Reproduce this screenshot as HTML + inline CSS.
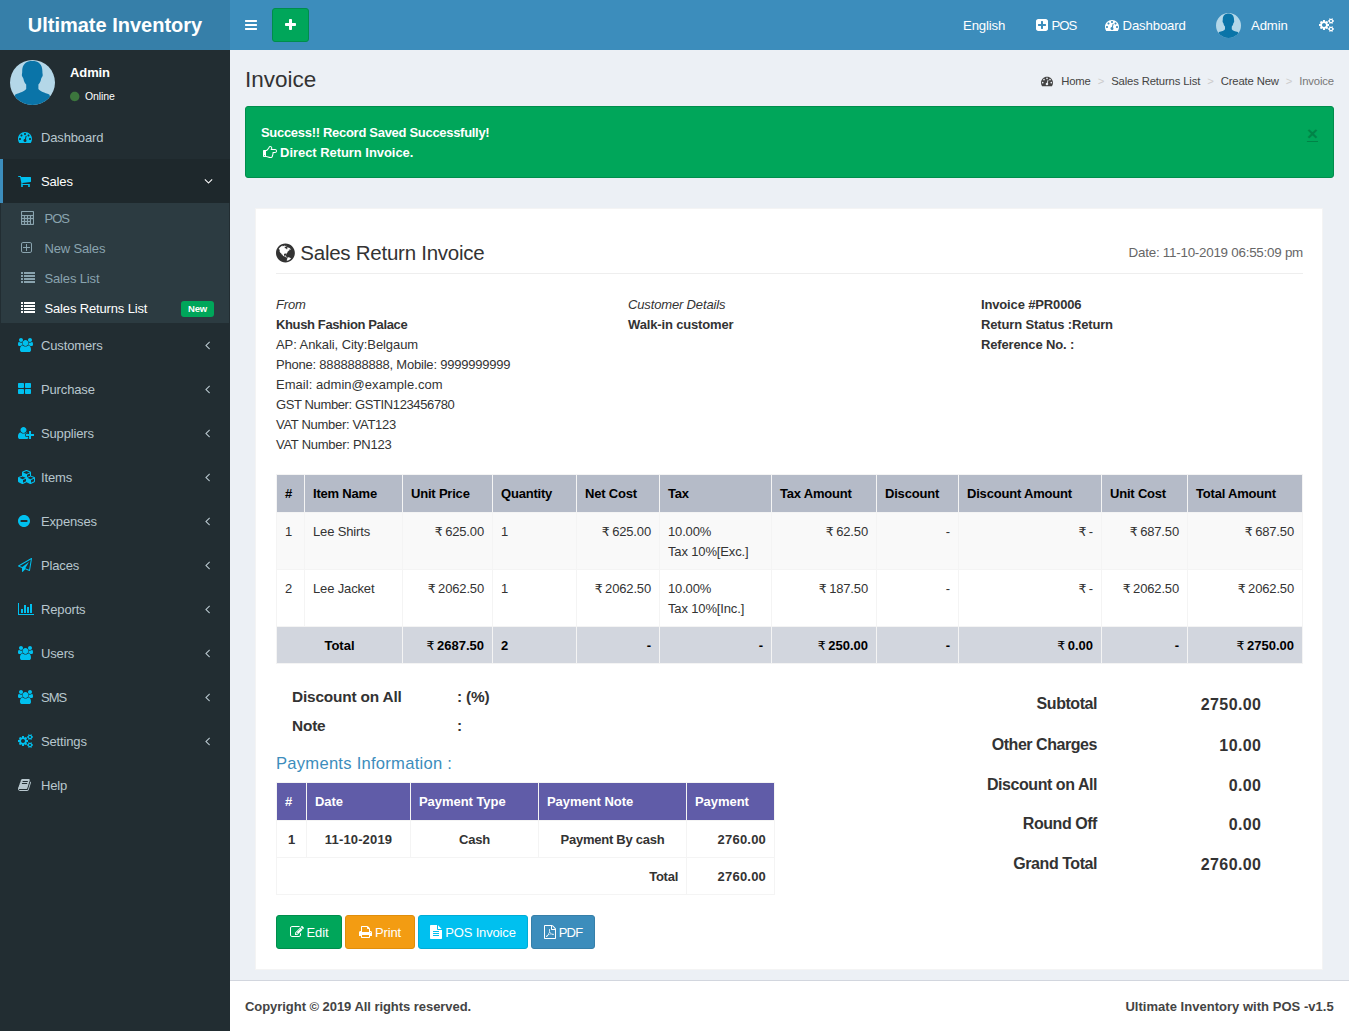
<!DOCTYPE html>
<html lang="en">
<head>
<meta charset="utf-8">
<title>Ultimate Inventory | Invoice</title>
<style>
*{box-sizing:border-box}
html,body{margin:0;padding:0}
body{width:1349px;height:1031px;overflow:hidden;background:#222d32;font-family:"Liberation Sans","DejaVu Sans",sans-serif;font-size:13px;line-height:20px;color:#333;letter-spacing:-0.15px;position:relative}
a{color:inherit;text-decoration:none}
ul{list-style:none;margin:0;padding:0}
svg.fa{display:inline-block;vertical-align:-2px;fill:currentColor;overflow:visible}
b,strong,th{font-weight:700}
.inr{font-family:"DejaVu Sans",sans-serif;font-size:12.5px;font-weight:400;letter-spacing:-1px;line-height:14px}

/* header */
.main-header{position:absolute;left:0;top:0;width:1349px;height:50px;background:#3c8dbc}
.logo{position:absolute;left:0;top:0;width:230px;height:50px;background:#367fa9;color:#fff;text-align:center;font-size:20px;line-height:50px;font-weight:700;letter-spacing:0}
.sidebar-toggle{position:absolute;left:230px;top:0;width:42px;height:50px;color:#fff;padding:16px 15px 14px;line-height:20px}
.btn-add{position:absolute;left:272px;top:8px;width:37px;height:34px;background:#00a65a;border:1px solid #008d4c;border-radius:3px;color:#fff;text-align:center;line-height:33px;padding-top:0}
.nav-item{position:absolute;top:0;height:50px;padding:16px 15px 14px;color:#fff;line-height:20px;font-size:13.2px;white-space:nowrap}
.nav-item .user-image{position:absolute;left:15px;top:13px;width:25px;height:25px}

/* sidebar */
.main-sidebar{position:absolute;left:0;top:50px;width:230px;height:981px;background:#222d32}
.user-panel{position:relative;height:65px}
.user-panel .avatar{position:absolute;left:10px;top:10px;width:45px;height:45px}
.user-panel .name{position:absolute;left:70px;top:13px;color:#fff;font-weight:700;font-size:13px;line-height:20px;letter-spacing:-0.1px}
.user-panel .status{position:absolute;left:70px;top:37px;color:#fff;font-size:10.5px;line-height:18px;letter-spacing:-0.1px}
.user-panel .status svg{margin-right:5.5px;color:#3c763d;vertical-align:-1.5px}
.sidebar-menu>li{position:relative}
.sidebar-menu>li>a{display:block;height:44px;padding:13px 5px 11px 15px;border-left:3px solid transparent;color:#b8c7ce;white-space:nowrap}
.sidebar-menu>li>a .ic{display:inline-block;width:23px;color:#00c0ef}
.sidebar-menu>li.active>a{background:#1e282c;border-left-color:#3c8dbc;color:#fff}
.sidebar-menu .arrow{position:absolute;right:20px;top:15px;color:inherit}
.treeview-menu{background:#2c3b41;padding-left:5px;margin:0 1px}
.treeview-menu>li{position:relative}
.treeview-menu>li>a{display:block;height:30px;padding:6px 5px 4px 15px;color:#8aa4af;white-space:nowrap}
.treeview-menu>li>a .ic{display:inline-block;width:23.5px}
.treeview-menu>li.active>a{color:#fff}
.label-new{position:absolute;right:15px;top:8px;width:33px;text-align:center;background:#00a65a;color:#fff;font-size:9.5px;font-weight:700;line-height:16px;height:16px;padding:0;border-radius:3px;letter-spacing:-0.1px}

/* content */
.content-wrapper{position:absolute;left:230px;top:50px;width:1119px;height:930px;background:#ecf0f5}
.content-wrapper h1{position:absolute;left:15px;top:17px;margin:0;font-size:22.5px;line-height:26px;font-weight:400;color:#333;letter-spacing:0}
.breadcrumb{position:absolute;right:15px;top:23px;font-size:11.3px;line-height:17px;color:#444;white-space:nowrap;letter-spacing:-0.15px}
.breadcrumb .sep{color:#ccc;padding:0 7px}
.breadcrumb .act{color:#777}
.alert{position:absolute;left:15px;top:56px;width:1089px;height:72px;background:#00a65a;border:1px solid #008d4c;border-radius:3px;color:#fff;padding:16px 15px 14px;font-weight:700;letter-spacing:-0.3px}
.alert .close{position:absolute;right:15px;top:17px;font-size:19px;line-height:20px;font-weight:700;color:#000;opacity:.2;text-decoration:underline;letter-spacing:0}
.invoice{position:absolute;left:25px;top:158px;width:1068px;height:762px;background:#fff;border:1px solid #f4f4f4}
.page-header{position:absolute;left:20px;top:31px;width:1027px;height:34px;padding-top:1px;border-bottom:1px solid #eee;margin:0;font-size:20.5px;line-height:24px;font-weight:400;letter-spacing:-0.25px;white-space:nowrap}
.page-header small{position:absolute;right:0;top:3px;font-size:13.4px;color:#666;line-height:20px;letter-spacing:-0.25px}
.col{position:absolute;top:86px;white-space:nowrap}
.col i{font-style:italic}
table{border-collapse:collapse;border-spacing:0;table-layout:fixed}
.items{position:absolute;left:20px;top:265px;width:1026px}
.items th,.items td{border:1px solid #f4f4f4;padding:9px 8px 7px;vertical-align:top;text-align:left;line-height:20px;white-space:nowrap;overflow:hidden}
.items th{background:#b5bbc8;color:#000;border-color:#f4f4f4;letter-spacing:-0.2px;padding:9px 8px 8px}
.items tr.odd td{background:#f9f9f9}
.items tr.tot td{background:#d2d6de;color:#000;font-weight:700;letter-spacing:0}
.r{text-align:right !important}
.c{text-align:center !important}
.dl{position:absolute;left:36px;font-size:15.4px;font-weight:700;line-height:24px;letter-spacing:-0.18px;white-space:nowrap}
.dl span{position:absolute;left:165px;top:0}
.pay-h{position:absolute;left:20px;top:543px;font-size:16.6px;line-height:24px;color:#3c8dbc;letter-spacing:0.25px;white-space:nowrap}
.pay{position:absolute;left:20px;top:573px;width:498px}
.pay th,.pay td{border:1px solid #f4f4f4;padding:9px 8px 7px;line-height:20px;font-weight:700;white-space:nowrap;letter-spacing:-0.25px}
.pay th{background:#605ca8;color:#fff;text-align:left;padding:9px 8px 8px;letter-spacing:-0.05px}
.pay .n{letter-spacing:0.2px}
.sum{position:absolute;font-size:16px;font-weight:700;line-height:24px;letter-spacing:-0.45px;white-space:nowrap;text-align:right}
.btn{position:absolute;top:706px;height:34px;border:1px solid;border-radius:3px;color:#fff;text-align:center;line-height:32px;padding-top:1px;white-space:nowrap;letter-spacing:-0.15px}
.btn svg{margin-right:3px}

.main-footer{position:absolute;left:230px;top:980px;width:1119px;height:51px;background:#fff;border-top:1px solid #d2d6de;padding:16px 15px 14px;color:#444;font-weight:700;letter-spacing:-0.05px;white-space:nowrap}
.main-footer .right{position:absolute;right:15.3px;top:16px;letter-spacing:0.03px}

.ls1{letter-spacing:-1px}
.sum.n{letter-spacing:0.4px}

</style>
</head>
<body>
<header class="main-header">
  <a class="logo" href="#">Ultimate Inventory</a>
  <a class="sidebar-toggle" href="#"><svg class="fa" width="12.00" height="14" viewBox="0 0 1536 1792"><path d="M1536 1344C1536 1309 1507 1280 1472 1280H64C29 1280 0 1309 0 1344V1472C0 1507 29 1536 64 1536H1472C1507 1536 1536 1507 1536 1472ZM1536 832C1536 797 1507 768 1472 768H64C29 768 0 797 0 832V960C0 995 29 1024 64 1024H1472C1507 1024 1536 995 1536 960ZM1536 320C1536 285 1507 256 1472 256H64C29 256 0 285 0 320V448C0 483 29 512 64 512H1472C1507 512 1536 483 1536 448Z"/></svg></a>
  <a class="btn-add" href="#"><svg class="fa" width="11.00" height="14" viewBox="0 0 1408 1792"><path d="M1408 736C1408 683 1365 640 1312 640H896V224C896 171 853 128 800 128H608C555 128 512 171 512 224V640H96C43 640 0 683 0 736V928C0 981 43 1024 96 1024H512V1440C512 1493 555 1536 608 1536H800C853 1536 896 1493 896 1440V1024H1312C1365 1024 1408 981 1408 928Z"/></svg></a>
  <a class="nav-item" href="#" style="left:948px">English</a>
  <a class="nav-item" href="#" style="left:1021px"><svg class="fa" width="12.00" height="14" viewBox="0 0 1536 1792"><path d="M1280 960C1280 995 1251 1024 1216 1024H896V1344C896 1379 867 1408 832 1408H704C669 1408 640 1379 640 1344V1024H320C285 1024 256 995 256 960V832C256 797 285 768 320 768H640V448C640 413 669 384 704 384H832C867 384 896 413 896 448V768H1216C1251 768 1280 797 1280 832V960ZM1536 416C1536 257 1407 128 1248 128H288C129 128 0 257 0 416V1376C0 1535 129 1664 288 1664H1248C1407 1664 1536 1535 1536 1376Z"/></svg> <span class="ls1">POS</span></a>
  <a class="nav-item" href="#" style="left:1090px"><svg class="fa" width="14.00" height="14" viewBox="0 0 1792 1792"><path d="M384 1152C384 1223 327 1280 256 1280C185 1280 128 1223 128 1152C128 1081 185 1024 256 1024C327 1024 384 1081 384 1152ZM576 704C576 775 519 832 448 832C377 832 320 775 320 704C320 633 377 576 448 576C519 576 576 633 576 704ZM1004 1185C1069 1230 1103 1312 1082 1393C1055 1495 950 1557 847 1530C745 1503 683 1398 710 1295C732 1214 801 1159 880 1153L981 771C990 737 1025 716 1059 725C1093 734 1113 769 1105 803ZM1664 1152C1664 1223 1607 1280 1536 1280C1465 1280 1408 1223 1408 1152C1408 1081 1465 1024 1536 1024C1607 1024 1664 1081 1664 1152ZM1024 512C1024 583 967 640 896 640C825 640 768 583 768 512C768 441 825 384 896 384C967 384 1024 441 1024 512ZM1472 704C1472 775 1415 832 1344 832C1273 832 1216 775 1216 704C1216 633 1273 576 1344 576C1415 576 1472 633 1472 704ZM1792 1152C1792 658 1390 256 896 256C402 256 0 658 0 1152C0 1324 49 1491 141 1635C153 1653 173 1664 195 1664H1597C1619 1664 1639 1653 1651 1635C1743 1490 1792 1324 1792 1152Z"/></svg> Dashboard</a>
  <a class="nav-item" href="#" style="left:1201px;padding-left:50px">
    <svg class="user-image" viewBox="0 0 45 45"><use href="#avatar"/></svg>Admin</a>
  <a class="nav-item" href="#" style="left:1304px"><svg class="fa" width="15.00" height="14" viewBox="0 0 1920 1792"><path d="M896 896C896 1037 781 1152 640 1152C499 1152 384 1037 384 896C384 755 499 640 640 640C781 640 896 755 896 896ZM1664 1408C1664 1478 1607 1536 1536 1536C1466 1536 1408 1479 1408 1408C1408 1338 1466 1280 1536 1280C1606 1280 1664 1338 1664 1408ZM1664 384C1664 454 1607 512 1536 512C1466 512 1408 455 1408 384C1408 314 1466 256 1536 256C1606 256 1664 314 1664 384ZM1280 805C1280 791 1270 778 1256 775L1104 752C1095 724 1083 697 1070 670C1098 631 1128 595 1157 556C1161 550 1164 544 1164 537C1164 509 1046 401 1020 377C1014 372 1007 369 999 369C992 369 985 371 979 376L861 465C837 453 812 442 786 434L763 281C761 267 747 256 733 256H547C533 256 521 266 517 280C504 329 499 384 494 434C467 443 442 453 417 466L302 376C296 372 289 369 281 369C252 369 140 490 120 517C115 523 113 530 113 537C113 544 116 551 120 557C152 595 182 632 210 672C197 697 186 722 178 748L23 772C10 774 0 789 0 802V987C0 1001 10 1014 24 1016L176 1040C185 1068 197 1095 211 1122C182 1161 152 1198 123 1236C119 1242 116 1248 116 1255C116 1284 234 1391 260 1415C266 1420 273 1423 281 1423C288 1423 296 1421 301 1416L419 1327C443 1339 468 1350 494 1358L517 1511C519 1525 533 1536 547 1536H733C747 1536 759 1526 763 1512C776 1463 781 1408 786 1357C813 1349 838 1339 863 1326L978 1416C984 1420 991 1423 999 1423C1028 1423 1140 1301 1160 1274C1165 1269 1167 1262 1167 1255C1167 1247 1164 1241 1160 1235C1128 1197 1098 1160 1070 1120C1083 1095 1094 1070 1102 1044L1257 1020C1270 1018 1280 1003 1280 990ZM1920 1338C1920 1323 1791 1309 1771 1307C1763 1289 1753 1271 1741 1255C1750 1235 1792 1135 1792 1117C1792 1115 1791 1112 1788 1110C1776 1103 1669 1040 1664 1040L1658 1042C1624 1076 1594 1115 1566 1154C1556 1153 1546 1152 1536 1152C1526 1152 1516 1153 1506 1154C1496 1139 1421 1040 1408 1040C1403 1040 1296 1104 1284 1110C1281 1112 1280 1115 1280 1117C1280 1134 1322 1235 1331 1255C1319 1271 1309 1289 1301 1307C1281 1309 1152 1323 1152 1338V1478C1152 1493 1281 1507 1301 1509C1309 1528 1319 1545 1331 1561C1322 1581 1280 1682 1280 1699C1280 1701 1281 1704 1284 1706C1296 1713 1403 1777 1408 1777C1421 1777 1496 1677 1506 1662C1516 1663 1526 1664 1536 1664C1546 1664 1556 1663 1566 1662C1576 1677 1651 1777 1664 1777C1669 1777 1776 1713 1788 1706C1791 1704 1792 1702 1792 1699C1792 1681 1750 1581 1741 1561C1753 1545 1763 1528 1771 1509C1791 1507 1920 1493 1920 1478ZM1920 314C1920 299 1791 285 1771 283C1763 265 1753 247 1741 231C1750 211 1792 111 1792 93C1792 91 1791 88 1788 86C1776 79 1669 16 1664 16L1658 18C1624 52 1594 91 1566 130C1556 129 1546 128 1536 128C1526 128 1516 129 1506 130C1496 115 1421 16 1408 16C1403 16 1296 80 1284 86C1281 88 1280 91 1280 93C1280 110 1322 211 1331 231C1319 247 1309 265 1301 283C1281 285 1152 299 1152 314V454C1152 469 1281 483 1301 485C1309 504 1319 521 1331 537C1322 557 1280 658 1280 675C1280 677 1281 680 1284 682C1296 689 1403 753 1408 753C1421 753 1496 653 1506 638C1516 639 1526 640 1536 640C1546 640 1556 639 1566 638C1576 653 1651 753 1664 753C1669 753 1776 689 1788 682C1791 680 1792 678 1792 675C1792 657 1750 557 1741 537C1753 521 1763 504 1771 485C1791 483 1920 469 1920 454Z"/></svg></a>
</header>

<aside class="main-sidebar">
  <div class="user-panel">
    <svg class="avatar" viewBox="0 0 45 45"><g id="avatar"><clipPath id="avc"><circle cx="22.5" cy="22.5" r="22.5"/></clipPath><circle cx="22.5" cy="22.5" r="22.5" fill="#b4d7e8"/><g clip-path="url(#avc)" fill="#0a74a8"><path d="M22.500 .8c-6.200 0-10.500 3.800-10.300 10.600.1 2-.5 2.800-.3 4.200.3 1.600 1.300 1.800 1.600 3.300.4 2.300 1.500 4.500 2.700 5.600v4.600c-1.400 2.400-6.200 3.700-10.900 5.300l-4 10.600h42l-4-10.600c-4.700-1.600-9.500-2.900-10.900-5.300v-4.600c1.200-1.100 2.300-3.300 2.700-5.600.3-1.500 1.300-1.700 1.600-3.300.2-1.400-.4-2.200-.3-4.200.2-6.800-4.100-10.600-10.300-10.600z"/></g></g></svg>
    <div class="name">Admin</div>
    <div class="status"><svg class="fa" width="9.43" height="11" viewBox="0 0 1536 1792"><path d="M1536 896C1536 472 1192 128 768 128C344 128 0 472 0 896C0 1320 344 1664 768 1664C1192 1664 1536 1320 1536 896Z"/></svg>Online</div>
  </div>
  <ul class="sidebar-menu">
    <li><a href="#"><span class="ic"><svg class="fa" width="14.00" height="14" viewBox="0 0 1792 1792"><path d="M384 1152C384 1223 327 1280 256 1280C185 1280 128 1223 128 1152C128 1081 185 1024 256 1024C327 1024 384 1081 384 1152ZM576 704C576 775 519 832 448 832C377 832 320 775 320 704C320 633 377 576 448 576C519 576 576 633 576 704ZM1004 1185C1069 1230 1103 1312 1082 1393C1055 1495 950 1557 847 1530C745 1503 683 1398 710 1295C732 1214 801 1159 880 1153L981 771C990 737 1025 716 1059 725C1093 734 1113 769 1105 803ZM1664 1152C1664 1223 1607 1280 1536 1280C1465 1280 1408 1223 1408 1152C1408 1081 1465 1024 1536 1024C1607 1024 1664 1081 1664 1152ZM1024 512C1024 583 967 640 896 640C825 640 768 583 768 512C768 441 825 384 896 384C967 384 1024 441 1024 512ZM1472 704C1472 775 1415 832 1344 832C1273 832 1216 775 1216 704C1216 633 1273 576 1344 576C1415 576 1472 633 1472 704ZM1792 1152C1792 658 1390 256 896 256C402 256 0 658 0 1152C0 1324 49 1491 141 1635C153 1653 173 1664 195 1664H1597C1619 1664 1639 1653 1651 1635C1743 1490 1792 1324 1792 1152Z"/></svg></span>Dashboard</a></li>
    <li class="active"><a href="#"><span class="ic"><svg class="fa" width="13.00" height="14" viewBox="0 0 1664 1792"><path d="M640 1536C640 1466 582 1408 512 1408C442 1408 384 1466 384 1536C384 1606 442 1664 512 1664C582 1664 640 1606 640 1536ZM1536 1536C1536 1466 1478 1408 1408 1408C1338 1408 1280 1466 1280 1536C1280 1606 1338 1664 1408 1664C1478 1664 1536 1606 1536 1536ZM1664 448C1664 413 1635 384 1600 384H399C389 336 387 256 320 256H64C29 256 0 285 0 320C0 355 29 384 64 384H268L445 1207C429 1238 384 1313 384 1344C384 1379 413 1408 448 1408H1472C1507 1408 1536 1379 1536 1344C1536 1309 1507 1280 1472 1280H552C562 1260 576 1239 576 1216C576 1192 568 1169 563 1146L1607 1024C1639 1020 1664 992 1664 960Z"/></svg></span>Sales<svg class="fa arrow" width="9.00" height="14" viewBox="0 0 1152 1792" style="right:17px"><path d="M1075 736C1075 728 1071 719 1065 713L1015 663C1009 657 1000 653 992 653C984 653 975 657 969 663L576 1056L183 663C177 657 168 653 160 653C151 653 143 657 137 663L87 713C81 719 77 728 77 736C77 744 81 753 87 759L553 1225C559 1231 568 1235 576 1235C584 1235 593 1231 599 1225L1065 759C1071 753 1075 744 1075 736Z"/></svg></a>
      <ul class="treeview-menu">
        <li><a href="#"><span class="ic"><svg class="fa" width="14.00" height="14" viewBox="0 0 1792 1792"><path d="M384 1536C384 1607 327 1664 256 1664C185 1664 128 1607 128 1536C128 1465 185 1408 256 1408C327 1408 384 1465 384 1536ZM768 1536C768 1607 711 1664 640 1664C569 1664 512 1607 512 1536C512 1465 569 1408 640 1408C711 1408 768 1465 768 1536ZM384 1152C384 1223 327 1280 256 1280C185 1280 128 1223 128 1152C128 1081 185 1024 256 1024C327 1024 384 1081 384 1152ZM1152 1536C1152 1607 1095 1664 1024 1664C953 1664 896 1607 896 1536C896 1465 953 1408 1024 1408C1095 1408 1152 1465 1152 1536ZM768 1152C768 1223 711 1280 640 1280C569 1280 512 1223 512 1152C512 1081 569 1024 640 1024C711 1024 768 1081 768 1152ZM384 768C384 839 327 896 256 896C185 896 128 839 128 768C128 697 185 640 256 640C327 640 384 697 384 768ZM1152 1152C1152 1223 1095 1280 1024 1280C953 1280 896 1223 896 1152C896 1081 953 1024 1024 1024C1095 1024 1152 1081 1152 1152ZM768 768C768 839 711 896 640 896C569 896 512 839 512 768C512 697 569 640 640 640C711 640 768 697 768 768ZM1536 1536C1536 1606 1478 1664 1408 1664C1338 1664 1280 1606 1280 1536V1152C1280 1082 1338 1024 1408 1024C1478 1024 1536 1082 1536 1152V1536ZM1152 768C1152 839 1095 896 1024 896C953 896 896 839 896 768C896 697 953 640 1024 640C1095 640 1152 697 1152 768ZM1536 448C1536 483 1507 512 1472 512H192C157 512 128 483 128 448V192C128 157 157 128 192 128H1472C1507 128 1536 157 1536 192V448ZM1536 768C1536 839 1479 896 1408 896C1337 896 1280 839 1280 768C1280 697 1337 640 1408 640C1479 640 1536 697 1536 768ZM1664 128C1664 58 1606 0 1536 0H128C58 0 0 58 0 128V1664C0 1734 58 1792 128 1792H1536C1606 1792 1664 1734 1664 1664Z"/></svg></span><span class="ls1">POS</span></a></li>
        <li><a href="#"><span class="ic"><svg class="fa" width="11.00" height="14" viewBox="0 0 1408 1792"><path d="M1152 800C1152 782 1138 768 1120 768H768V416C768 398 754 384 736 384H672C654 384 640 398 640 416V768H288C270 768 256 782 256 800V864C256 882 270 896 288 896H640V1248C640 1266 654 1280 672 1280H736C754 1280 768 1266 768 1248V896H1120C1138 896 1152 882 1152 864ZM1280 1248C1280 1336 1208 1408 1120 1408H288C200 1408 128 1336 128 1248V416C128 328 200 256 288 256H1120C1208 256 1280 328 1280 416V1248ZM1408 416C1408 257 1279 128 1120 128H288C129 128 0 257 0 416V1248C0 1407 129 1536 288 1536H1120C1279 1536 1408 1407 1408 1248Z"/></svg></span>New Sales</a></li>
        <li><a href="#"><span class="ic"><svg class="fa" width="14.00" height="14" viewBox="0 0 1792 1792"><path d="M256 1312C256 1295 241 1280 224 1280H32C15 1280 0 1295 0 1312V1504C0 1521 15 1536 32 1536H224C241 1536 256 1521 256 1504ZM256 928C256 911 241 896 224 896H32C15 896 0 911 0 928V1120C0 1137 15 1152 32 1152H224C241 1152 256 1137 256 1120ZM256 544C256 527 241 512 224 512H32C15 512 0 527 0 544V736C0 753 15 768 32 768H224C241 768 256 753 256 736ZM1792 1312C1792 1295 1777 1280 1760 1280H416C399 1280 384 1295 384 1312V1504C384 1521 399 1536 416 1536H1760C1777 1536 1792 1521 1792 1504ZM256 160C256 143 241 128 224 128H32C15 128 0 143 0 160V352C0 369 15 384 32 384H224C241 384 256 369 256 352ZM1792 928C1792 911 1777 896 1760 896H416C399 896 384 911 384 928V1120C384 1137 399 1152 416 1152H1760C1777 1152 1792 1137 1792 1120ZM1792 544C1792 527 1777 512 1760 512H416C399 512 384 527 384 544V736C384 753 399 768 416 768H1760C1777 768 1792 753 1792 736ZM1792 160C1792 143 1777 128 1760 128H416C399 128 384 143 384 160V352C384 369 399 384 416 384H1760C1777 384 1792 369 1792 352Z"/></svg></span>Sales List</a></li>
        <li class="active"><a href="#"><span class="ic"><svg class="fa" width="14.00" height="14" viewBox="0 0 1792 1792"><path d="M256 1312C256 1295 241 1280 224 1280H32C15 1280 0 1295 0 1312V1504C0 1521 15 1536 32 1536H224C241 1536 256 1521 256 1504ZM256 928C256 911 241 896 224 896H32C15 896 0 911 0 928V1120C0 1137 15 1152 32 1152H224C241 1152 256 1137 256 1120ZM256 544C256 527 241 512 224 512H32C15 512 0 527 0 544V736C0 753 15 768 32 768H224C241 768 256 753 256 736ZM1792 1312C1792 1295 1777 1280 1760 1280H416C399 1280 384 1295 384 1312V1504C384 1521 399 1536 416 1536H1760C1777 1536 1792 1521 1792 1504ZM256 160C256 143 241 128 224 128H32C15 128 0 143 0 160V352C0 369 15 384 32 384H224C241 384 256 369 256 352ZM1792 928C1792 911 1777 896 1760 896H416C399 896 384 911 384 928V1120C384 1137 399 1152 416 1152H1760C1777 1152 1792 1137 1792 1120ZM1792 544C1792 527 1777 512 1760 512H416C399 512 384 527 384 544V736C384 753 399 768 416 768H1760C1777 768 1792 753 1792 736ZM1792 160C1792 143 1777 128 1760 128H416C399 128 384 143 384 160V352C384 369 399 384 416 384H1760C1777 384 1792 369 1792 352Z"/></svg></span>Sales Returns List</a><span class="label-new">New</span></li>
      </ul>
    </li>
    <li><a href="#"><span class="ic"><svg class="fa" width="15.00" height="14" viewBox="0 0 1920 1792"><path d="M593 896C541 821 512 731 512 640C512 618 514 596 517 574C474 589 430 597 384 597C249 597 145 512 124 512C-3 512 0 784 0 865C0 976 94 1024 194 1024H328C395 944 489 899 593 896ZM1664 1533C1664 1307 1611 960 1318 960C1284 960 1160 1099 960 1099C760 1099 636 960 602 960C309 960 256 1307 256 1533C256 1695 363 1792 523 1792H1397C1557 1792 1664 1695 1664 1533ZM640 256C640 115 525 0 384 0C243 0 128 115 128 256C128 397 243 512 384 512C525 512 640 397 640 256ZM1344 640C1344 428 1172 256 960 256C748 256 576 428 576 640C576 852 748 1024 960 1024C1172 1024 1344 852 1344 640ZM1920 865C1920 784 1923 512 1796 512C1775 512 1671 597 1536 597C1490 597 1446 589 1403 574C1406 596 1408 618 1408 640C1408 731 1379 821 1327 896C1431 899 1525 944 1592 1024H1726C1826 1024 1920 976 1920 865ZM1792 256C1792 115 1677 0 1536 0C1395 0 1280 115 1280 256C1280 397 1395 512 1536 512C1677 512 1792 397 1792 256Z"/></svg></span>Customers<svg class="fa arrow" width="5.00" height="14" viewBox="0 0 640 1792"><path d="M627 544C627 535 623 527 617 521L567 471C561 465 552 461 544 461C536 461 527 465 521 471L55 937C49 943 45 952 45 960C45 968 49 977 55 983L521 1449C527 1455 536 1459 544 1459C552 1459 561 1455 567 1449L617 1399C623 1393 627 1384 627 1376C627 1368 623 1359 617 1353L224 960L617 567C623 561 627 552 627 544Z"/></svg></a></li>
    <li><a href="#"><span class="ic"><svg class="fa" width="13.00" height="14" viewBox="0 0 1664 1792"><path d="M768 1024C768 954 710 896 640 896H128C58 896 0 954 0 1024V1408C0 1478 58 1536 128 1536H640C710 1536 768 1478 768 1408ZM768 256C768 186 710 128 640 128H128C58 128 0 186 0 256V640C0 710 58 768 128 768H640C710 768 768 710 768 640ZM1664 1024C1664 954 1606 896 1536 896H1024C954 896 896 954 896 1024V1408C896 1478 954 1536 1024 1536H1536C1606 1536 1664 1478 1664 1408ZM1664 256C1664 186 1606 128 1536 128H1024C954 128 896 186 896 256V640C896 710 954 768 1024 768H1536C1606 768 1664 710 1664 640Z"/></svg></span>Purchase<svg class="fa arrow" width="5.00" height="14" viewBox="0 0 640 1792"><path d="M627 544C627 535 623 527 617 521L567 471C561 465 552 461 544 461C536 461 527 465 521 471L55 937C49 943 45 952 45 960C45 968 49 977 55 983L521 1449C527 1455 536 1459 544 1459C552 1459 561 1455 567 1449L617 1399C623 1393 627 1384 627 1376C627 1368 623 1359 617 1353L224 960L617 567C623 561 627 552 627 544Z"/></svg></a></li>
    <li><a href="#"><span class="ic"><svg class="fa" width="16.00" height="14" viewBox="0 0 2048 1792"><path d="M704 896C916 896 1088 724 1088 512C1088 300 916 128 704 128C492 128 320 300 320 512C320 724 492 896 704 896ZM1664 1024V672C1664 655 1649 640 1632 640H1440C1423 640 1408 655 1408 672V1024H1056C1039 1024 1024 1039 1024 1056V1248C1024 1265 1039 1280 1056 1280H1408V1632C1408 1649 1423 1664 1440 1664H1632C1649 1664 1664 1649 1664 1632V1280H2016C2033 1280 2048 1265 2048 1248V1056C2048 1039 2033 1024 2016 1024ZM928 1248V1056C928 986 986 928 1056 928H1279C1222 864 1147 832 1062 832C1046 832 1035 839 1023 849C925 924 830 971 704 971C578 971 483 924 385 849C373 839 362 832 346 832C53 832 0 1179 0 1405C0 1568 107 1664 267 1664H1141C1201 1664 1263 1650 1312 1614V1376H1056C986 1376 928 1318 928 1248Z"/></svg></span>Suppliers<svg class="fa arrow" width="5.00" height="14" viewBox="0 0 640 1792"><path d="M627 544C627 535 623 527 617 521L567 471C561 465 552 461 544 461C536 461 527 465 521 471L55 937C49 943 45 952 45 960C45 968 49 977 55 983L521 1449C527 1455 536 1459 544 1459C552 1459 561 1455 567 1449L617 1399C623 1393 627 1384 627 1376C627 1368 623 1359 617 1353L224 960L617 567C623 561 627 552 627 544Z"/></svg></a></li>
    <li><a href="#"><span class="ic"><svg class="fa" width="18.00" height="14" viewBox="0 0 2304 1792"><path d="M640 1632V1290L1024 1126V1440ZM576 1178 172 1005 576 832 980 1005ZM1664 1632V1290L2048 1126V1440ZM1600 1178 1196 1005 1600 832 2004 1005ZM1152 885V618L1536 454V720ZM1088 506 647 317 1088 128 1529 317ZM2176 1024C2176 973 2146 927 2098 906L1664 720V320C1664 269 1633 223 1586 202L1138 10C1122 3 1105 0 1088 0C1071 0 1054 3 1038 10L590 202C543 223 512 269 512 320V720L78 906C31 927 0 973 0 1024V1440C0 1488 27 1533 71 1554L519 1778C537 1788 556 1792 576 1792C596 1792 615 1788 633 1778L1081 1554C1084 1553 1086 1552 1088 1550C1090 1552 1092 1553 1095 1554L1543 1778C1561 1788 1580 1792 1600 1792C1620 1792 1639 1788 1657 1778L2105 1554C2149 1533 2176 1488 2176 1440Z"/></svg></span>Items<svg class="fa arrow" width="5.00" height="14" viewBox="0 0 640 1792"><path d="M627 544C627 535 623 527 617 521L567 471C561 465 552 461 544 461C536 461 527 465 521 471L55 937C49 943 45 952 45 960C45 968 49 977 55 983L521 1449C527 1455 536 1459 544 1459C552 1459 561 1455 567 1449L617 1399C623 1393 627 1384 627 1376C627 1368 623 1359 617 1353L224 960L617 567C623 561 627 552 627 544Z"/></svg></a></li>
    <li><a href="#"><span class="ic"><svg class="fa" width="12.00" height="14" viewBox="0 0 1536 1792"><path d="M1216 960C1216 995 1187 1024 1152 1024H384C349 1024 320 995 320 960V832C320 797 349 768 384 768H1152C1187 768 1216 797 1216 832V960ZM1536 896C1536 472 1192 128 768 128C344 128 0 472 0 896C0 1320 344 1664 768 1664C1192 1664 1536 1320 1536 896Z"/></svg></span>Expenses<svg class="fa arrow" width="5.00" height="14" viewBox="0 0 640 1792"><path d="M627 544C627 535 623 527 617 521L567 471C561 465 552 461 544 461C536 461 527 465 521 471L55 937C49 943 45 952 45 960C45 968 49 977 55 983L521 1449C527 1455 536 1459 544 1459C552 1459 561 1455 567 1449L617 1399C623 1393 627 1384 627 1376C627 1368 623 1359 617 1353L224 960L617 567C623 561 627 552 627 544Z"/></svg></a></li>
    <li><a href="#"><span class="ic"><svg class="fa" width="14.00" height="14" viewBox="0 0 1792 1792"><path d="M1764 11C1744 -3 1717 -4 1696 9L32 969C11 981 -2 1004 0 1028C2 1053 17 1074 40 1083L512 1276V1728C512 1754 528 1778 553 1788C560 1791 568 1792 576 1792C594 1792 611 1785 623 1771L921 1444L1448 1659C1456 1662 1464 1664 1472 1664C1483 1664 1494 1661 1503 1656C1520 1646 1532 1630 1535 1611L1791 75C1795 50 1785 26 1764 11ZM1422 1510 930 1309 1408 512 545 1151 209 1014 1643 187Z"/></svg></span>Places<svg class="fa arrow" width="5.00" height="14" viewBox="0 0 640 1792"><path d="M627 544C627 535 623 527 617 521L567 471C561 465 552 461 544 461C536 461 527 465 521 471L55 937C49 943 45 952 45 960C45 968 49 977 55 983L521 1449C527 1455 536 1459 544 1459C552 1459 561 1455 567 1449L617 1399C623 1393 627 1384 627 1376C627 1368 623 1359 617 1353L224 960L617 567C623 561 627 552 627 544Z"/></svg></a></li>
    <li><a href="#"><span class="ic"><svg class="fa" width="16.00" height="14" viewBox="0 0 2048 1792"><path d="M640 896H384V1408H640ZM1024 384H768V1408H1024ZM2048 1536H128V128H0V1664H2048ZM1408 640H1152V1408H1408ZM1792 256H1536V1408H1792Z"/></svg></span>Reports<svg class="fa arrow" width="5.00" height="14" viewBox="0 0 640 1792"><path d="M627 544C627 535 623 527 617 521L567 471C561 465 552 461 544 461C536 461 527 465 521 471L55 937C49 943 45 952 45 960C45 968 49 977 55 983L521 1449C527 1455 536 1459 544 1459C552 1459 561 1455 567 1449L617 1399C623 1393 627 1384 627 1376C627 1368 623 1359 617 1353L224 960L617 567C623 561 627 552 627 544Z"/></svg></a></li>
    <li><a href="#"><span class="ic"><svg class="fa" width="15.00" height="14" viewBox="0 0 1920 1792"><path d="M593 896C541 821 512 731 512 640C512 618 514 596 517 574C474 589 430 597 384 597C249 597 145 512 124 512C-3 512 0 784 0 865C0 976 94 1024 194 1024H328C395 944 489 899 593 896ZM1664 1533C1664 1307 1611 960 1318 960C1284 960 1160 1099 960 1099C760 1099 636 960 602 960C309 960 256 1307 256 1533C256 1695 363 1792 523 1792H1397C1557 1792 1664 1695 1664 1533ZM640 256C640 115 525 0 384 0C243 0 128 115 128 256C128 397 243 512 384 512C525 512 640 397 640 256ZM1344 640C1344 428 1172 256 960 256C748 256 576 428 576 640C576 852 748 1024 960 1024C1172 1024 1344 852 1344 640ZM1920 865C1920 784 1923 512 1796 512C1775 512 1671 597 1536 597C1490 597 1446 589 1403 574C1406 596 1408 618 1408 640C1408 731 1379 821 1327 896C1431 899 1525 944 1592 1024H1726C1826 1024 1920 976 1920 865ZM1792 256C1792 115 1677 0 1536 0C1395 0 1280 115 1280 256C1280 397 1395 512 1536 512C1677 512 1792 397 1792 256Z"/></svg></span>Users<svg class="fa arrow" width="5.00" height="14" viewBox="0 0 640 1792"><path d="M627 544C627 535 623 527 617 521L567 471C561 465 552 461 544 461C536 461 527 465 521 471L55 937C49 943 45 952 45 960C45 968 49 977 55 983L521 1449C527 1455 536 1459 544 1459C552 1459 561 1455 567 1449L617 1399C623 1393 627 1384 627 1376C627 1368 623 1359 617 1353L224 960L617 567C623 561 627 552 627 544Z"/></svg></a></li>
    <li><a href="#"><span class="ic"><svg class="fa" width="15.00" height="14" viewBox="0 0 1920 1792"><path d="M593 896C541 821 512 731 512 640C512 618 514 596 517 574C474 589 430 597 384 597C249 597 145 512 124 512C-3 512 0 784 0 865C0 976 94 1024 194 1024H328C395 944 489 899 593 896ZM1664 1533C1664 1307 1611 960 1318 960C1284 960 1160 1099 960 1099C760 1099 636 960 602 960C309 960 256 1307 256 1533C256 1695 363 1792 523 1792H1397C1557 1792 1664 1695 1664 1533ZM640 256C640 115 525 0 384 0C243 0 128 115 128 256C128 397 243 512 384 512C525 512 640 397 640 256ZM1344 640C1344 428 1172 256 960 256C748 256 576 428 576 640C576 852 748 1024 960 1024C1172 1024 1344 852 1344 640ZM1920 865C1920 784 1923 512 1796 512C1775 512 1671 597 1536 597C1490 597 1446 589 1403 574C1406 596 1408 618 1408 640C1408 731 1379 821 1327 896C1431 899 1525 944 1592 1024H1726C1826 1024 1920 976 1920 865ZM1792 256C1792 115 1677 0 1536 0C1395 0 1280 115 1280 256C1280 397 1395 512 1536 512C1677 512 1792 397 1792 256Z"/></svg></span><span class="ls1">SMS</span><svg class="fa arrow" width="5.00" height="14" viewBox="0 0 640 1792"><path d="M627 544C627 535 623 527 617 521L567 471C561 465 552 461 544 461C536 461 527 465 521 471L55 937C49 943 45 952 45 960C45 968 49 977 55 983L521 1449C527 1455 536 1459 544 1459C552 1459 561 1455 567 1449L617 1399C623 1393 627 1384 627 1376C627 1368 623 1359 617 1353L224 960L617 567C623 561 627 552 627 544Z"/></svg></a></li>
    <li><a href="#"><span class="ic"><svg class="fa" width="15.00" height="14" viewBox="0 0 1920 1792"><path d="M896 896C896 1037 781 1152 640 1152C499 1152 384 1037 384 896C384 755 499 640 640 640C781 640 896 755 896 896ZM1664 1408C1664 1478 1607 1536 1536 1536C1466 1536 1408 1479 1408 1408C1408 1338 1466 1280 1536 1280C1606 1280 1664 1338 1664 1408ZM1664 384C1664 454 1607 512 1536 512C1466 512 1408 455 1408 384C1408 314 1466 256 1536 256C1606 256 1664 314 1664 384ZM1280 805C1280 791 1270 778 1256 775L1104 752C1095 724 1083 697 1070 670C1098 631 1128 595 1157 556C1161 550 1164 544 1164 537C1164 509 1046 401 1020 377C1014 372 1007 369 999 369C992 369 985 371 979 376L861 465C837 453 812 442 786 434L763 281C761 267 747 256 733 256H547C533 256 521 266 517 280C504 329 499 384 494 434C467 443 442 453 417 466L302 376C296 372 289 369 281 369C252 369 140 490 120 517C115 523 113 530 113 537C113 544 116 551 120 557C152 595 182 632 210 672C197 697 186 722 178 748L23 772C10 774 0 789 0 802V987C0 1001 10 1014 24 1016L176 1040C185 1068 197 1095 211 1122C182 1161 152 1198 123 1236C119 1242 116 1248 116 1255C116 1284 234 1391 260 1415C266 1420 273 1423 281 1423C288 1423 296 1421 301 1416L419 1327C443 1339 468 1350 494 1358L517 1511C519 1525 533 1536 547 1536H733C747 1536 759 1526 763 1512C776 1463 781 1408 786 1357C813 1349 838 1339 863 1326L978 1416C984 1420 991 1423 999 1423C1028 1423 1140 1301 1160 1274C1165 1269 1167 1262 1167 1255C1167 1247 1164 1241 1160 1235C1128 1197 1098 1160 1070 1120C1083 1095 1094 1070 1102 1044L1257 1020C1270 1018 1280 1003 1280 990ZM1920 1338C1920 1323 1791 1309 1771 1307C1763 1289 1753 1271 1741 1255C1750 1235 1792 1135 1792 1117C1792 1115 1791 1112 1788 1110C1776 1103 1669 1040 1664 1040L1658 1042C1624 1076 1594 1115 1566 1154C1556 1153 1546 1152 1536 1152C1526 1152 1516 1153 1506 1154C1496 1139 1421 1040 1408 1040C1403 1040 1296 1104 1284 1110C1281 1112 1280 1115 1280 1117C1280 1134 1322 1235 1331 1255C1319 1271 1309 1289 1301 1307C1281 1309 1152 1323 1152 1338V1478C1152 1493 1281 1507 1301 1509C1309 1528 1319 1545 1331 1561C1322 1581 1280 1682 1280 1699C1280 1701 1281 1704 1284 1706C1296 1713 1403 1777 1408 1777C1421 1777 1496 1677 1506 1662C1516 1663 1526 1664 1536 1664C1546 1664 1556 1663 1566 1662C1576 1677 1651 1777 1664 1777C1669 1777 1776 1713 1788 1706C1791 1704 1792 1702 1792 1699C1792 1681 1750 1581 1741 1561C1753 1545 1763 1528 1771 1509C1791 1507 1920 1493 1920 1478ZM1920 314C1920 299 1791 285 1771 283C1763 265 1753 247 1741 231C1750 211 1792 111 1792 93C1792 91 1791 88 1788 86C1776 79 1669 16 1664 16L1658 18C1624 52 1594 91 1566 130C1556 129 1546 128 1536 128C1526 128 1516 129 1506 130C1496 115 1421 16 1408 16C1403 16 1296 80 1284 86C1281 88 1280 91 1280 93C1280 110 1322 211 1331 231C1319 247 1309 265 1301 283C1281 285 1152 299 1152 314V454C1152 469 1281 483 1301 485C1309 504 1319 521 1331 537C1322 557 1280 658 1280 675C1280 677 1281 680 1284 682C1296 689 1403 753 1408 753C1421 753 1496 653 1506 638C1516 639 1526 640 1536 640C1546 640 1556 639 1566 638C1576 653 1651 753 1664 753C1669 753 1776 689 1788 682C1791 680 1792 678 1792 675C1792 657 1750 557 1741 537C1753 521 1763 504 1771 485C1791 483 1920 469 1920 454Z"/></svg></span>Settings<svg class="fa arrow" width="5.00" height="14" viewBox="0 0 640 1792"><path d="M627 544C627 535 623 527 617 521L567 471C561 465 552 461 544 461C536 461 527 465 521 471L55 937C49 943 45 952 45 960C45 968 49 977 55 983L521 1449C527 1455 536 1459 544 1459C552 1459 561 1455 567 1449L617 1399C623 1393 627 1384 627 1376C627 1368 623 1359 617 1353L224 960L617 567C623 561 627 552 627 544Z"/></svg></a></li>
    <li><a href="#"><span class="ic" style="color:inherit"><svg class="fa" width="13.00" height="14" viewBox="0 0 1664 1792"><path d="M1639 478C1624 458 1603 444 1580 435C1581 453 1581 473 1575 492L1275 1479C1264 1515 1221 1536 1184 1536H261C206 1536 137 1524 117 1466C109 1444 110 1435 118 1423C127 1411 143 1408 156 1408H1025C1152 1408 1178 1374 1225 1220L1499 314C1513 267 1507 220 1481 184C1456 149 1414 128 1367 128H606C589 128 572 133 555 137L556 134C429 98 421 235 379 297C363 320 339 340 335 359C332 377 342 394 340 411C334 464 294 559 270 592C255 612 233 622 226 645C220 661 230 684 228 705C223 752 188 841 161 887C151 905 132 919 127 938C122 955 132 977 127 996C116 1048 82 1129 52 1179C36 1206 15 1223 11 1247C9 1259 18 1272 17 1288C16 1312 12 1332 10 1352C-4 1390 -4 1434 12 1479C49 1583 158 1664 260 1664H1183C1269 1664 1357 1598 1382 1513L1657 607C1671 561 1664 514 1639 478ZM575 480 596 416C602 398 621 384 638 384H1246C1264 384 1274 398 1268 416L1247 480C1241 498 1222 512 1205 512H597C579 512 569 498 575 480ZM492 736 513 672C519 654 538 640 555 640H1163C1181 640 1191 654 1185 672L1164 736C1158 754 1139 768 1122 768H514C496 768 486 754 492 736Z"/></svg></span>Help</a></li>
  </ul>
</aside>

<div class="content-wrapper">
  <h1>Invoice</h1>
  <div class="breadcrumb"><svg class="fa" width="12.00" height="12" viewBox="0 0 1792 1792" style="margin-right:5px"><path d="M384 1152C384 1223 327 1280 256 1280C185 1280 128 1223 128 1152C128 1081 185 1024 256 1024C327 1024 384 1081 384 1152ZM576 704C576 775 519 832 448 832C377 832 320 775 320 704C320 633 377 576 448 576C519 576 576 633 576 704ZM1004 1185C1069 1230 1103 1312 1082 1393C1055 1495 950 1557 847 1530C745 1503 683 1398 710 1295C732 1214 801 1159 880 1153L981 771C990 737 1025 716 1059 725C1093 734 1113 769 1105 803ZM1664 1152C1664 1223 1607 1280 1536 1280C1465 1280 1408 1223 1408 1152C1408 1081 1465 1024 1536 1024C1607 1024 1664 1081 1664 1152ZM1024 512C1024 583 967 640 896 640C825 640 768 583 768 512C768 441 825 384 896 384C967 384 1024 441 1024 512ZM1472 704C1472 775 1415 832 1344 832C1273 832 1216 775 1216 704C1216 633 1273 576 1344 576C1415 576 1472 633 1472 704ZM1792 1152C1792 658 1390 256 896 256C402 256 0 658 0 1152C0 1324 49 1491 141 1635C153 1653 173 1664 195 1664H1597C1619 1664 1639 1653 1651 1635C1743 1490 1792 1324 1792 1152Z"/></svg> Home<span class="sep">&gt;</span>Sales Returns List<span class="sep">&gt;</span>Create New<span class="sep">&gt;</span><span class="act">Invoice</span></div>
  <div class="alert">
    <span class="close">&times;</span>
    <div>Success!! Record Saved Successfully!</div>
    <div style="letter-spacing:-0.05px;padding-left:1.5px"><svg class="fa" width="14.00" height="14" viewBox="0 0 1792 1792"><path d="M256 1344C256 1379 227 1408 192 1408C157 1408 128 1379 128 1344C128 1309 157 1280 192 1280C227 1280 256 1309 256 1344ZM1664 768C1664 837 1605 896 1536 896H1205C1226 920 1240 967 1240 999C1240 1046 1221 1086 1187 1118C1199 1139 1205 1163 1205 1187C1205 1233 1182 1290 1140 1313C1143 1331 1145 1350 1145 1369C1145 1489 1068 1536 956 1536C762 1536 591 1408 416 1408H384V768H416C522 768 593 678 657 605C698 559 736 513 769 460C782 439 794 417 806 395C817 372 868 256 896 256C981 256 1056 288 1056 384C1056 512 960 577 960 640H1536C1603 640 1664 700 1664 768ZM1792 767C1792 629 1674 512 1536 512H1162C1177 471 1184 428 1184 384C1184 215 1055 128 896 128C762 128 719 299 661 392C631 439 597 480 561 521C532 554 464 640 416 640H128C57 640 0 697 0 768V1408C0 1479 57 1536 128 1536H416C479 1536 578 1573 639 1595C743 1633 849 1664 961 1664C1146 1664 1275 1553 1273 1364C1312 1314 1333 1250 1333 1186C1333 1172 1332 1157 1330 1143C1351 1106 1364 1066 1367 1024H1536C1676 1024 1792 907 1792 767Z"/></svg> Direct Return Invoice.</div>
  </div>

  <section class="invoice">
    <h2 class="page-header"><svg class="fa" width="18.86" height="22" viewBox="0 0 1536 1792" style="vertical-align:-4px"><path d="M768 128C344 128 0 472 0 896C0 1320 344 1664 768 1664C1192 1664 1536 1320 1536 896C1536 472 1192 128 768 128ZM1042 649C1053 642 1071 633 1085 637C1096 640 1105 644 1092 653C1086 657 1077 653 1070 655C1079 657 1092 661 1088 670C1114 685 1080 703 1063 701C1071 702 1046 717 1046 716C1037 721 1025 721 1018 730C1010 741 1021 760 1006 756C1000 769 977 762 967 776C978 788 956 805 945 790C935 794 940 805 930 811C934 817 935 823 928 827C930 826 942 836 945 837C943 842 939 846 934 846C939 859 928 873 919 881C909 889 886 897 883 899C865 916 853 941 885 948C886 948 886 981 887 982C889 994 894 1029 873 1016C863 1011 857 983 854 972C851 960 850 960 842 948C829 963 827 952 816 945C805 939 789 941 783 935C768 946 757 943 754 926C750 934 758 946 757 949C752 959 743 957 735 951C722 941 694 958 679 951C680 951 684 955 687 957C684 969 677 962 671 966C664 971 658 981 652 986C665 1011 651 1035 652 1062C652 1082 665 1117 684 1128C693 1133 723 1135 732 1131C746 1125 744 1114 749 1102C754 1089 760 1083 775 1082C818 1080 785 1115 780 1133C777 1146 776 1161 774 1173C779 1175 784 1174 789 1174C789 1170 792 1165 792 1162C798 1172 818 1175 824 1163C831 1175 845 1184 847 1198C849 1212 862 1227 843 1227C829 1227 845 1255 847 1260C858 1280 876 1288 896 1278C896 1286 893 1308 882 1310C872 1312 853 1291 857 1280C856 1284 853 1287 850 1289C840 1277 823 1271 814 1259C812 1256 785 1215 791 1213C777 1219 749 1209 736 1202C715 1191 712 1162 686 1166C668 1169 663 1176 642 1168C628 1163 616 1153 602 1146C586 1137 558 1128 552 1108C546 1092 548 1073 539 1058C533 1048 515 1028 502 1028C514 1028 491 998 488 995C477 982 437 947 445 927C447 924 425 916 421 915C425 925 426 936 431 945C436 955 442 964 448 974C459 992 474 1014 472 1036C459 1040 463 1021 459 1013C452 1000 433 1000 428 986C430 985 431 985 433 984C434 967 409 953 413 941C399 930 399 909 389 895C380 882 365 876 352 867C347 864 311 818 324 815C304 820 294 773 297 761C297 761 295 761 295 760C299 748 292 686 308 685C297 686 294 659 297 654C299 650 314 665 315 667C321 664 327 656 325 649C322 641 311 634 304 628C301 626 261 600 260 601C264 594 263 587 257 582C238 597 248 568 238 565C234 564 230 561 226 557C284 465 365 388 461 335C467 334 475 334 483 334C501 336 511 351 524 360C526 355 522 347 519 342C522 334 534 332 541 330C550 329 563 327 571 331C565 322 558 314 551 306C550 307 547 309 546 311C535 302 514 314 504 318C496 322 489 327 481 330C476 332 473 332 469 331C499 315 530 301 563 290C569 294 575 301 584 308C578 303 578 326 580 330C591 345 615 335 630 335C629 335 674 341 665 330C672 340 672 355 681 364C690 355 677 345 683 336C685 332 703 327 709 324C716 319 704 312 701 310C691 304 652 301 671 278C678 270 703 274 711 279C722 285 734 296 719 306C726 307 759 316 754 329C757 323 762 314 770 314C779 315 781 336 785 341C799 366 823 316 827 318C809 311 843 302 852 305C859 308 870 332 857 331C868 341 869 363 849 362C835 361 819 342 806 357C797 367 793 382 784 391C770 405 751 404 734 402C741 403 719 426 717 430C711 437 707 445 705 453C703 463 705 474 700 484C717 479 726 510 719 511C740 508 757 508 777 515C791 520 812 526 818 541C822 535 841 538 847 540C859 546 860 559 863 570C867 585 880 610 897 602C900 600 922 590 914 584C906 577 897 559 905 549C913 538 932 535 937 521C945 498 913 501 913 484C913 474 926 471 925 459C925 449 910 429 922 422C932 416 980 426 989 432C998 438 1026 446 1028 455C1026 455 1025 455 1023 455C1031 462 1038 477 1024 481C1033 479 1059 489 1041 495C1047 492 1052 494 1058 490C1065 486 1069 479 1078 484C1080 485 1091 463 1097 464C1106 465 1108 478 1112 484C1116 493 1127 496 1131 505C1138 522 1135 538 1158 544C1165 546 1184 535 1183 550C1187 546 1189 543 1189 542C1190 556 1196 572 1213 570C1213 570 1213 589 1211 592C1205 601 1190 599 1181 604C1178 605 1154 626 1157 629C1144 614 1123 614 1106 618C1088 621 1071 623 1054 630C1046 634 1038 638 1032 645C1029 649 1024 667 1019 668C1029 666 1034 655 1042 649ZM879 1526C878 1521 877 1511 877 1510C876 1494 893 1483 892 1468C881 1465 878 1454 880 1442C882 1425 897 1413 909 1402C921 1391 924 1368 921 1354C916 1330 916 1305 912 1281C913 1287 930 1285 933 1293C937 1286 939 1277 944 1270C948 1264 955 1262 961 1257C971 1251 992 1228 1004 1242C1014 1254 989 1267 1002 1278C1006 1270 1002 1258 1010 1250C1026 1232 1037 1252 1053 1257C1070 1262 1076 1268 1089 1279C1085 1275 1105 1268 1107 1267C1126 1263 1134 1274 1147 1284C1161 1294 1183 1301 1181 1321C1191 1323 1197 1326 1205 1329C1213 1333 1224 1331 1230 1337C1138 1434 1016 1502 879 1526Z"/></svg> Sales Return Invoice<small>Date: 11-10-2019 06:55:09 pm</small></h2>
    <div class="col" style="left:20px">
      <i>From</i><br>
      <b style="letter-spacing:-0.37px">Khush Fashion Palace</b><br>
      <span style="letter-spacing:-0.07px">AP: Ankali, City:Belgaum</span><br>
      <span style="letter-spacing:-0.21px">Phone: 8888888888, Mobile: 9999999999</span><br>
      <span style="letter-spacing:0.04px">Email: admin@example.com</span><br>
      <span style="letter-spacing:-0.38px">GST Number: GSTIN123456780</span><br>
      <span style="letter-spacing:-0.3px">VAT Number: VAT123</span><br>
      <span style="letter-spacing:-0.27px">VAT Number: PN123</span>
    </div>
    <div class="col" style="left:372px">
      <i>Customer Details</i><br>
      <b>Walk-in customer</b>
    </div>
    <div class="col" style="left:725px">
      <b>Invoice #PR0006</b><br>
      <b>Return Status :Return</b><br>
      <b>Reference No. :</b>
    </div>

    <table class="items">
      <colgroup><col style="width:28px"><col style="width:98px"><col style="width:90px"><col style="width:84px"><col style="width:83px"><col style="width:112px"><col style="width:105px"><col style="width:82px"><col style="width:143px"><col style="width:86px"><col style="width:115px"></colgroup>
      <thead><tr><th>#</th><th>Item Name</th><th>Unit Price</th><th>Quantity</th><th>Net Cost</th><th>Tax</th><th>Tax Amount</th><th>Discount</th><th>Discount Amount</th><th>Unit Cost</th><th>Total Amount</th></tr></thead>
      <tbody>
        <tr class="odd"><td>1</td><td>Lee Shirts</td><td class="r"><span class="inr">₹</span> 625.00</td><td>1</td><td class="r"><span class="inr">₹</span> 625.00</td><td>10.00%<br>Tax 10%[Exc.]</td><td class="r"><span class="inr">₹</span> 62.50</td><td class="r">-</td><td class="r"><span class="inr">₹</span> -</td><td class="r"><span class="inr">₹</span> 687.50</td><td class="r"><span class="inr">₹</span> 687.50</td></tr>
        <tr><td>2</td><td>Lee Jacket</td><td class="r"><span class="inr">₹</span> 2062.50</td><td>1</td><td class="r"><span class="inr">₹</span> 2062.50</td><td>10.00%<br>Tax 10%[Inc.]</td><td class="r"><span class="inr">₹</span> 187.50</td><td class="r">-</td><td class="r"><span class="inr">₹</span> -</td><td class="r"><span class="inr">₹</span> 2062.50</td><td class="r"><span class="inr">₹</span> 2062.50</td></tr>
        <tr class="tot"><td colspan="2" class="c">Total</td><td class="r"><span class="inr">₹</span> 2687.50</td><td>2</td><td class="r">-</td><td class="r">-</td><td class="r"><span class="inr">₹</span> 250.00</td><td class="r">-</td><td class="r"><span class="inr">₹</span> 0.00</td><td class="r">-</td><td class="r"><span class="inr">₹</span> 2750.00</td></tr>
      </tbody>
    </table>

    <div class="dl" style="top:476px">Discount on All<span>: (%)</span></div>
    <div class="dl" style="top:505px">Note<span>:</span></div>

    <div class="pay-h">Payments Information :</div>
    <table class="pay">
      <colgroup><col style="width:30px"><col style="width:104px"><col style="width:128px"><col style="width:148px"><col style="width:88px"></colgroup>
      <thead><tr><th>#</th><th>Date</th><th>Payment Type</th><th>Payment Note</th><th>Payment</th></tr></thead>
      <tbody>
        <tr><td class="c">1</td><td class="c" style="letter-spacing:0.15px">11-10-2019</td><td class="c">Cash</td><td class="c">Payment By cash</td><td class="r n">2760.00</td></tr>
        <tr><td colspan="4" class="r">Total</td><td class="r n">2760.00</td></tr>
      </tbody>
    </table>

    <div class="sum" style="right:225px;top:483px">Subtotal</div><div class="sum n" style="right:60.6px;top:484px">2750.00</div>
    <div class="sum" style="right:225px;top:524px">Other Charges</div><div class="sum n" style="right:60.6px;top:525px">10.00</div>
    <div class="sum" style="right:225px;top:564px">Discount on All</div><div class="sum n" style="right:60.6px;top:565px">0.00</div>
    <div class="sum" style="right:225px;top:603px">Round Off</div><div class="sum n" style="right:60.6px;top:604px">0.00</div>
    <div class="sum" style="right:225px;top:643px">Grand Total</div><div class="sum n" style="right:60.6px;top:644px">2760.00</div>

    <a class="btn" href="#" style="left:20px;width:66px;background:#00a65a;border-color:#008d4c"><svg class="fa" width="14.00" height="14" viewBox="0 0 1792 1792"><path d="M888 1184H832V1088H736V1032L852 916L1004 1068ZM1328 464C1337 473 1336 488 1327 497L977 847C968 856 953 857 944 848C935 839 936 824 945 815L1295 465C1304 456 1319 455 1328 464ZM1408 1058C1408 1045 1400 1034 1388 1029C1376 1024 1363 1026 1353 1036L1289 1100C1283 1106 1280 1114 1280 1122V1248C1280 1336 1208 1408 1120 1408H288C200 1408 128 1336 128 1248V416C128 328 200 256 288 256H1120C1135 256 1150 258 1165 262C1176 266 1188 263 1197 254L1246 205C1254 197 1257 187 1255 176C1253 166 1246 157 1237 153C1200 136 1160 128 1120 128H288C129 128 0 257 0 416V1248C0 1407 129 1536 288 1536H1120C1279 1536 1408 1407 1408 1248ZM1312 320 640 992V1280H928L1600 608ZM1756 452C1793 415 1793 353 1756 316L1604 164C1567 127 1505 127 1468 164L1376 256L1664 544L1756 452Z"/></svg>Edit</a>
    <a class="btn" href="#" style="left:89px;width:70px;background:#f39c12;border-color:#e08e0b"><svg class="fa" width="13.00" height="14" viewBox="0 0 1664 1792"><path d="M384 1536V1280H1280V1536ZM384 896V256H1024V416C1024 469 1067 512 1120 512H1280V896ZM1536 960C1536 995 1507 1024 1472 1024C1437 1024 1408 995 1408 960C1408 925 1437 896 1472 896C1507 896 1536 925 1536 960ZM1664 960C1664 855 1577 768 1472 768H1408V512C1408 459 1378 386 1340 348L1188 196C1150 158 1077 128 1024 128H352C299 128 256 171 256 224V768H192C87 768 0 855 0 960V1376C0 1393 15 1408 32 1408H256V1568C256 1621 299 1664 352 1664H1312C1365 1664 1408 1621 1408 1568V1408H1632C1649 1408 1664 1393 1664 1376Z"/></svg>Print</a>
    <a class="btn" href="#" style="left:162px;width:110px;background:#00c0ef;border-color:#00acd6"><svg class="fa" width="12.00" height="14" viewBox="0 0 1536 1792"><path d="M1468 476 1060 68C1050 58 1038 49 1024 40V512H1496C1487 498 1478 486 1468 476ZM992 640C939 640 896 597 896 544V0H96C43 0 0 43 0 96V1696C0 1749 43 1792 96 1792H1440C1493 1792 1536 1749 1536 1696V640ZM1152 1376C1152 1394 1138 1408 1120 1408H416C398 1408 384 1394 384 1376V1312C384 1294 398 1280 416 1280H1120C1138 1280 1152 1294 1152 1312ZM1152 1120C1152 1138 1138 1152 1120 1152H416C398 1152 384 1138 384 1120V1056C384 1038 398 1024 416 1024H1120C1138 1024 1152 1038 1152 1056ZM1152 864C1152 882 1138 896 1120 896H416C398 896 384 882 384 864V800C384 782 398 768 416 768H1120C1138 768 1152 782 1152 800Z"/></svg>POS Invoice</a>
    <a class="btn" href="#" style="left:275px;width:64px;background:#3c8dbc;border-color:#367fa9"><svg class="fa" width="12.00" height="14" viewBox="0 0 1536 1792"><path d="M1468 380 1156 68C1119 31 1045 0 992 0H96C43 0 0 43 0 96V1696C0 1749 43 1792 96 1792H1440C1493 1792 1536 1749 1536 1696V544C1536 491 1505 417 1468 380ZM1024 136C1041 142 1058 151 1065 158L1378 471C1385 478 1394 495 1400 512H1024ZM1408 1664H128V128H896V544C896 597 939 640 992 640H1408ZM894 1071C835 1023 783 938 748 833C760 764 761 704 762 641C762 631 762 621 762 611C762 608 762 606 761 603C763 601 764 598 765 595C771 563 768 541 756 527C748 517 736 512 721 512H720H699C679 512 664 527 657 552C639 618 649 730 681 839C657 923 622 1011 577 1101C537 1182 501 1247 470 1298C470 1297 469 1295 468 1294C463 1286 453 1283 445 1288C321 1353 267 1430 257 1476C254 1496 258 1507 263 1512C265 1514 266 1516 269 1517L293 1529C302 1534 311 1536 321 1536C381 1536 460 1450 563 1274C670 1237 816 1206 955 1191C1039 1235 1136 1264 1200 1264C1253 1264 1268 1244 1271 1226C1271 1226 1271 1225 1271 1225C1272 1224 1273 1222 1274 1221C1285 1197 1279 1179 1272 1169C1247 1128 1162 1120 1095 1120C1059 1120 1020 1122 978 1127C947 1109 919 1091 894 1071ZM318 1482C333 1448 380 1382 455 1324C391 1425 348 1468 318 1482ZM716 562C716 561 717 560 717 558C723 565 729 576 730 594C731 596 731 598 732 599C730 602 729 604 728 607C726 619 723 633 721 650C719 663 717 678 714 694C706 638 706 590 716 562ZM592 1223C607 1196 622 1168 637 1140C673 1069 701 1004 720 943C754 1016 798 1076 847 1119C856 1127 866 1134 876 1142C778 1160 680 1188 592 1223ZM1238 1207C1239 1208 1240 1209 1240 1210C1236 1211 1231 1211 1222 1211C1192 1211 1147 1201 1098 1183C1207 1183 1233 1202 1238 1207Z"/></svg><span style="letter-spacing:-0.8px">PDF</span></a>
  </section>
</div>

<footer class="main-footer">
  Copyright © 2019 All rights reserved.
  <div class="right">Ultimate Inventory with POS -v1.5</div>
</footer>

</body>
</html>
